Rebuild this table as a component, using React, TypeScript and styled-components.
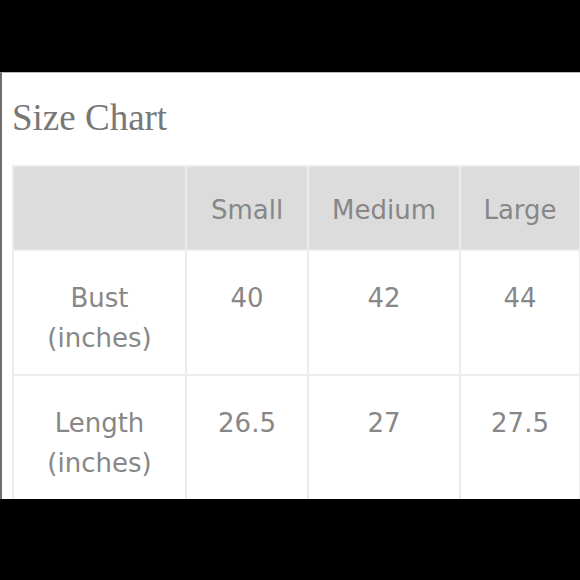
import styled, { createGlobalStyle } from 'styled-components';
import { FC } from 'react';

const GlobalStyle = createGlobalStyle`
  html, body {
    margin: 0;
    padding: 0;
    background: #000;
  }
`;

const Frame = styled.div`
  width: 580px;
  height: 580px;
  display: flex;
  flex-direction: column;
  background: #000;
  overflow: hidden;
`;

const Bar = styled.div<{ $h: number }>`
  height: ${(p) => p.$h}px;
  flex: none;
  background: #000;
`;

const Panel = styled.div`
  flex: 1;
  min-height: 0;
  background: #fff;
  border-top: 1px solid #b8b8b8;
  border-left: 2px solid #6e6e6e;
  padding-left: 10px;
  overflow: hidden;
`;

const Title = styled.h2`
  margin: 26px 0 0;
  font-family: "Liberation Serif", Georgia, serif;
  font-weight: normal;
  font-size: 37px;
  line-height: 37px;
  color: #777;
`;

const Table = styled.table`
  margin-top: 29px;
  width: 567px;
  table-layout: fixed;
  border-collapse: collapse;
  font-family: "DejaVu Sans", Verdana, sans-serif;
  font-size: 26px;
  line-height: 40px;
  color: #878787;
`;

const HeadCell = styled.th`
  height: 78px;
  padding: 4px 0 0;
  background: #dcdcdc;
  border: 2px solid #ececec;
  font-weight: normal;
  text-align: center;
  vertical-align: middle;
`;

const Cell = styled.td`
  height: 96px;
  padding: 27px 0 0;
  border: 2px solid #ececec;
  text-align: center;
  vertical-align: top;
`;

interface Row {
  label: string;
  values: string[];
}

const sizes = ['Small', 'Medium', 'Large'];

const rows: Row[] = [
  { label: 'Bust', values: ['40', '42', '44'] },
  { label: 'Length', values: ['26.5', '27', '27.5'] },
];

const App: FC = () => {
  return (
    <>
      <GlobalStyle />
      <Frame>
        <Bar $h={72} />
        <Panel>
          <Title>Size Chart</Title>
          <Table>
            <colgroup>
              <col style={{ width: 173 }} />
              <col style={{ width: 122 }} />
              <col style={{ width: 152 }} />
              <col style={{ width: 120 }} />
            </colgroup>
            <thead>
              <tr>
                <HeadCell />
                {sizes.map((s) => (
                  <HeadCell key={s}>{s}</HeadCell>
                ))}
              </tr>
            </thead>
            <tbody>
              {rows.map((r) => (
                <tr key={r.label}>
                  <Cell>
                    {r.label}
                    <br />
                    (inches)
                  </Cell>
                  {r.values.map((v, i) => (
                    <Cell key={i}>{v}</Cell>
                  ))}
                </tr>
              ))}
            </tbody>
          </Table>
        </Panel>
        <Bar $h={81} />
      </Frame>
    </>
  );
};

export default App;
